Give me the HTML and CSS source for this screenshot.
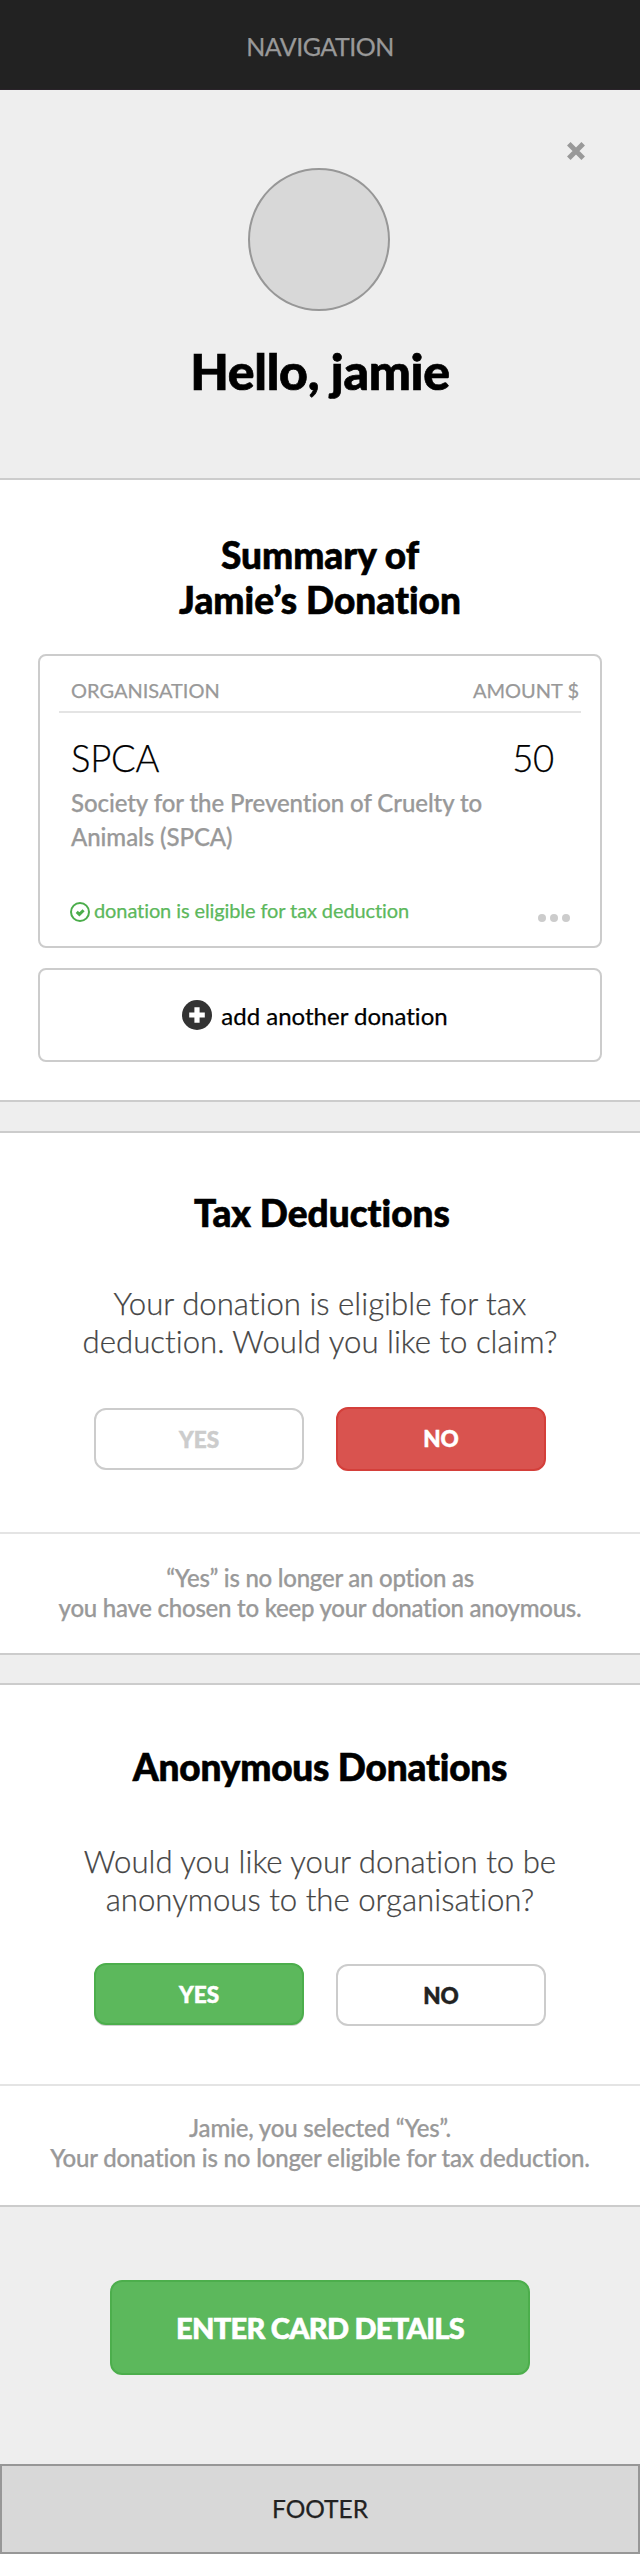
FILE: index.html
```html
<!DOCTYPE html>
<html lang="en">
<head>
<meta charset="utf-8">
<title>Donation summary</title>
<link rel="stylesheet" href="styles.css">
</head>
<body>
<nav class="nav">NAVIGATION</nav>

<header class="hero">
  <svg class="close" width="20" height="20" viewBox="0 0 20 20"><path d="M2.8 2.8 17.2 17.2M17.2 2.8 2.8 17.2"/></svg>
  <div class="avatar"></div>
  <h1 class="hello">Hello, jamie</h1>
</header>

<section class="summary">
  <h2 class="title">Summary of<br>Jamie’s Donation</h2>
  <div class="card">
    <div class="card-head"><span>ORGANISATION</span><span>AMOUNT $</span></div>
    <div class="card-row"><span>SPCA</span><span>50</span></div>
    <p class="card-desc">Society for the Prevention of Cruelty to<br>Animals (SPCA)</p>
    <div class="card-foot">
      <span class="eligible">
        <svg width="20" height="20" viewBox="0 0 20 20"><circle cx="10" cy="10" r="9" fill="none" stroke="#4bad4b" stroke-width="2"/><path d="M6.7 9.8 9.4 12.4 13.6 8.2" fill="none" stroke="#4bad4b" stroke-width="3"/></svg>
        <span class="eligible-text">donation is eligible for tax deduction</span>
      </span>
      <svg class="dots" width="32" height="8" viewBox="0 0 32 8"><circle cx="4" cy="4" r="4"/><circle cx="16" cy="4" r="4"/><circle cx="28" cy="4" r="4"/></svg>
    </div>
  </div>
  <div class="add">
    <svg width="30" height="30" viewBox="0 0 30 30"><circle cx="15" cy="15" r="15" fill="#333"/><path d="M15 7.2V22.8M7.2 15H22.8" stroke="#fff" stroke-width="5.2"/></svg>
    <span>add another donation</span>
  </div>
</section>

<section class="panel tax">
  <h2 class="title">Tax Deductions</h2>
  <p class="question">Your donation is eligible for tax<br>deduction. Would you like to claim?</p>
  <div class="choices">
    <div class="btn disabled">YES</div>
    <div class="btn red">NO</div>
  </div>
  <p class="note">“Yes” is no longer an option as<br>you have chosen to keep your donation anoymous.</p>
</section>

<section class="panel anon">
  <h2 class="title">Anonymous Donations</h2>
  <p class="question">Would you like your donation to be<br>anonymous to the organisation?</p>
  <div class="choices">
    <div class="btn green">YES</div>
    <div class="btn plain">NO</div>
  </div>
  <p class="note">Jamie, you selected “Yes”.<br>Your donation is no longer eligible for tax deduction.</p>
</section>

<div class="checkout"><div class="cta">ENTER CARD DETAILS</div></div>
<footer class="footer">FOOTER</footer>
</body>
</html>
```
FILE: styles.css
```css
* { box-sizing: border-box; margin: 0; padding: 0; }
body {
  width: 640px;
  background: #eee;
  color: #000;
  font-family: Lato, sans-serif;
  font-variant-ligatures: none;
  -webkit-text-stroke: 0.25px currentColor;
}
svg { display: block; flex: none; }

.nav {
  height: 90px;
  padding-top: 31px;
  background: #222;
  border-bottom: 1px solid #2a232a;
  color: #999;
  font-size: 25px;
  line-height: 30px;
  letter-spacing: -0.5px;
  text-align: center;
}

.hero {
  position: relative;
  height: 390px;
  padding-top: 78px;
  border-bottom: 2px solid #ccc;
  text-align: center;
}
.close {
  position: absolute;
  top: 51px;
  right: 54px;
  fill: none;
  stroke: #999;
  stroke-width: 5px;
}
.avatar {
  width: 142px;
  height: 143px;
  margin: 0 0 30px 248px;
  border: 2px solid #979797;
  border-radius: 50%;
  background: #d8d8d8;
}
.hello {
  font-size: 50px;
  font-weight: 900;
  line-height: 60px;
  letter-spacing: -0.3px;
  -webkit-text-stroke: 0.7px currentColor;
}

.summary {
  height: 622px;
  padding: 52px 38px 0;
  background: #fff;
  border-bottom: 2px solid #ccc;
}
.title {
  font-size: 37px;
  font-weight: 900;
  line-height: 45px;
  text-align: center;
  -webkit-text-stroke: 0.6px currentColor;
}

.card {
  height: 294px;
  margin-top: 32px;
  padding: 22px 19px 0;
  border: 2px solid #ccc;
  border-radius: 8px;
}
.card-head {
  display: flex;
  justify-content: space-between;
  height: 35px;
  padding: 0 2px 0 12px;
  border-bottom: 2px solid #e4e4e4;
  color: #999;
  font-size: 20px;
  line-height: 24px;
}
.card-row {
  display: flex;
  justify-content: space-between;
  margin-top: 25px;
  padding: 0 27px 0 12px;
  font-size: 36.5px;
  font-weight: 300;
  line-height: 40px;
  letter-spacing: -0.3px;
}
.card-desc {
  margin-top: 8px;
  padding-left: 12px;
  color: #999;
  font-size: 24px;
  font-weight: 500;
  line-height: 34px;
  letter-spacing: -0.07px;
}
.card-foot {
  display: flex;
  justify-content: space-between;
  margin-top: 44px;
  padding: 0 11px;
}
.eligible { display: flex; gap: 4px; }
.eligible svg { margin-top: 4px; }
.eligible-text {
  color: #5cb85c;
  font-size: 20px;
  line-height: 24px;
  letter-spacing: -0.1px;
}
.dots { margin-top: 16px; fill: #ccc; }

.add {
  display: flex;
  align-items: center;
  justify-content: center;
  gap: 9px;
  height: 94px;
  margin-top: 20px;
  padding-right: 10px;
  border: 2px solid #ccc;
  border-radius: 8px;
  font-size: 24px;
}

.panel { background: #fff; border: solid #ccc; border-width: 2px 0; }
.tax { height: 524px; margin-top: 29px; padding-top: 57px; }
.anon { height: 524px; margin-top: 28px; padding-top: 59px; }
.tax .title { padding-left: 4px; }
.anon .title { letter-spacing: -0.2px; }
.question {
  color: #444;
  font-size: 31.2px;
  font-weight: 300;
  line-height: 38px;
  text-align: center;
}
.tax .question { margin-top: 49px; }
.anon .question { margin-top: 53px; }
.choices {
  display: flex;
  align-items: center;
  justify-content: center;
  gap: 32px;
}
.tax .choices { height: 64px; margin-top: 47px; }
.anon .choices { height: 63px; margin-top: 45px; }
.btn {
  width: 210px;
  height: 62px;
  border: 2px solid #ccc;
  border-radius: 12px;
  font-size: 22.5px;
  font-weight: 900;
  line-height: 60px;
  text-align: center;
  -webkit-text-stroke: 0.5px currentColor;
}
.disabled { color: #ccc; }
.plain { align-self: flex-end; color: #222; }
.red { height: 64px; background: #d9534f; border-color: #d43f3a; color: #fff; }
.green {
  align-self: flex-start;
  background: #5cb85c;
  border-color: #4cae4c;
  box-shadow: 0 1px 0 #d0d0d0;
  color: #fff;
}
.note {
  border-top: 2px solid #e4e4e4;
  padding-top: 29px;
  color: #999;
  font-size: 24px;
  font-weight: 500;
  line-height: 30px;
  letter-spacing: -0.25px;
  text-align: center;
}
.tax .note { margin-top: 61px; }
.anon .note { margin-top: 58px; padding-top: 27px; letter-spacing: -0.18px; }

.checkout { height: 257px; padding-top: 73px; }
.cta {
  width: 420px;
  height: 95px;
  margin: 0 auto;
  border: 2px solid #4cae4c;
  border-radius: 12px;
  background: #5cb85c;
  color: #fff;
  font-size: 29px;
  font-weight: 900;
  line-height: 92px;
  letter-spacing: -0.7px;
  text-align: center;
  -webkit-text-stroke: 0.6px currentColor;
}
.footer {
  height: 90px;
  padding-top: 27px;
  border: 2px solid #979797;
  background: #d8d8d8;
  color: #222;
  font-size: 24.5px;
  line-height: 32px;
  text-align: center;
}
```
